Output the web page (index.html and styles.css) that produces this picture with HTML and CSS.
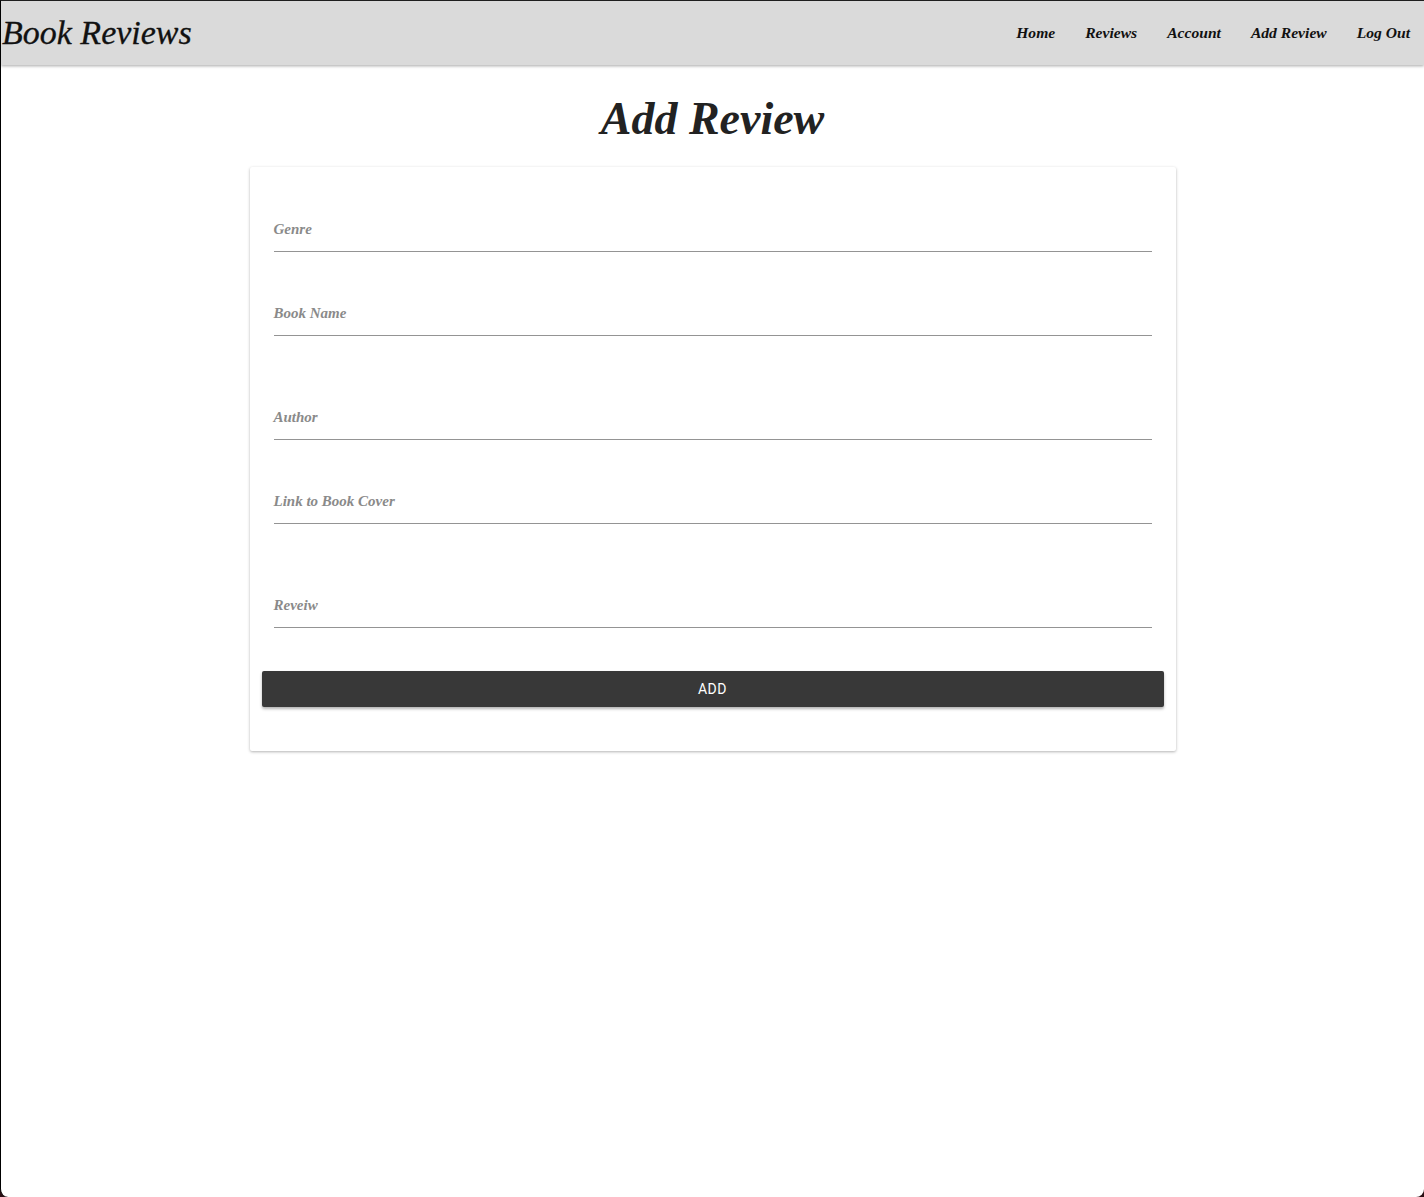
FILE: index.html
```html
<!DOCTYPE html>
<html>
<head>
<meta charset="utf-8">
<link rel="stylesheet" href="styles.css">
</head>
<body>
<div class="frame">
  <header class="topbar">
    <div class="brand">Book Reviews</div>
    <nav class="nav">
      <a>Home</a>
      <a>Reviews</a>
      <a>Account</a>
      <a>Add Review</a>
      <a>Log Out</a>
    </nav>
  </header>
  <main class="main">
    <h1 class="title">Add Review</h1>
    <form class="card">
      <div class="field first"><span class="label">Genre</span></div>
      <div class="field"><span class="label">Book Name</span></div>
      <div class="field wide"><span class="label">Author</span></div>
      <div class="field"><span class="label">Link to Book Cover</span></div>
      <div class="field wide"><span class="label">Reveiw</span></div>
      <button type="button" class="btn">ADD</button>
    </form>
  </main>
</div>
</body>
</html>
```
FILE: styles.css
```css
* { box-sizing: border-box; }
html, body { margin: 0; padding: 0; background: #2a0f14; }
body { font-family: "Liberation Serif", serif; }
.frame {
  width: 1424px;
  height: 1197px;
  background: #fff;
  border-top: 1px solid #1e1e1e;
  border-left: 1px solid #000;
  border-radius: 0 0 8px 8px;
  overflow: hidden;
}
.topbar {
  height: 64px;
  background: #dadada;
  display: flex;
  align-items: center;
  justify-content: space-between;
  box-shadow: 0 1px 3px rgba(0,0,0,0.35);
  position: relative;
  padding-right: 14px;
}
.brand {
  font-style: italic;
  font-size: 34px;
  color: #111;
  padding-left: 1px;
  -webkit-text-stroke: 0.3px #111;
}
.nav { display: flex; gap: 30px; }
.nav a {
  font-style: italic;
  font-weight: 600;
  font-size: 15.6px;
  color: #111;
}
.main { display: flex; flex-direction: column; align-items: center; }
.title {
  margin: 26px 0 0;
  height: 76px;
  font-style: italic;
  font-weight: 600;
  font-size: 46px;
  color: #222;
  line-height: 56px;
}
.card {
  width: 926px;
  background: #fff;
  box-shadow: 0 1px 3px rgba(0,0,0,0.3);
  border-radius: 2px;
  padding: 25px 12px 44px;
  display: flex;
  flex-direction: column;
}
.field {
  height: 60px;
  margin: 24px 12px 0;
  border-bottom: 1px solid #949494;
  display: flex;
  align-items: flex-end;
  padding-bottom: 13px;
}
.field.first { margin-top: 0; }
.field.wide { margin-top: 44px; }
.label {
  font-style: italic;
  font-weight: 600;
  font-size: 15px;
  line-height: 18px;
  color: #8a8a8a;
}
.btn {
  margin-top: 43px;
  height: 36px;
  border: none;
  border-radius: 2px;
  background: #383838;
  color: #fff;
  font-family: Roboto, sans-serif;
  font-weight: 400;
  font-size: 14px;
  letter-spacing: 0.5px;
  box-shadow: 0 2px 3px rgba(0,0,0,0.3);
}
```
